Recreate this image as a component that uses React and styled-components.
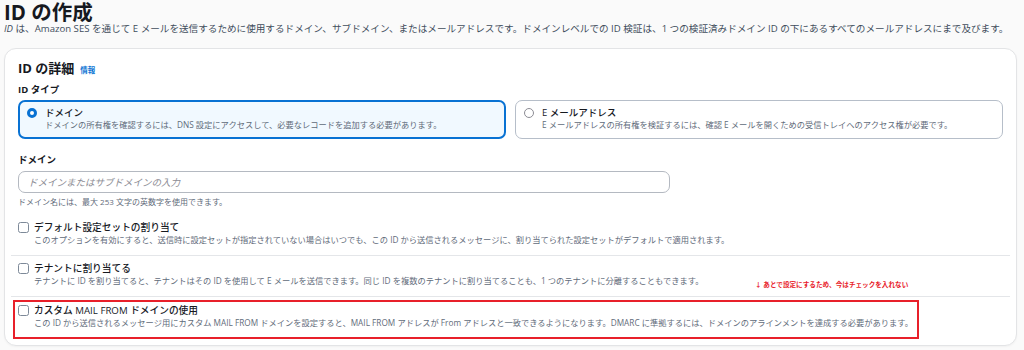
import React from "react";
import styled, { createGlobalStyle } from "styled-components";

const Global = createGlobalStyle`
  html, body { margin: 0; padding: 0; background: #fafafa; }
  body {
    font-family: "Open Sans", "Noto Sans CJK JP", sans-serif;
    color: #16191f;
  }
  * { box-sizing: border-box; }
`;

const Page = styled.div`
  width: 1024px;
  height: 350px;
  overflow: hidden;
  padding: 0 7px 0 4px;
`;

const Title = styled.h1`
  margin: 1px 0 0;
  font-size: 20.5px;
  line-height: 22px;
  font-weight: 700;
`;

const Lead = styled.p`
  margin: -1px 0 0;
  font-size: 9.6px;
  line-height: 14px;
  color: #414d5c;
  white-space: nowrap;
  em { font-style: italic; }
`;

const Card = styled.section`
  margin-top: 12px;
  height: 298px;
  background: #fff;
  border: 1px solid #e3e4e6;
  border-radius: 12px;
  box-shadow: 0 1px 2px rgba(0, 0, 0, 0.04);
  padding: 11px 13px 0 13px;
`;

const HeadingRow = styled.div`
  display: flex;
  align-items: baseline;
  gap: 6px;
`;

const Heading = styled.h2`
  margin: 0;
  font-size: 13px;
  line-height: 16px;
  font-weight: 700;
`;

const InfoLink = styled.a`
  font-size: 7.5px;
  font-weight: 700;
  color: #0972d3;
  text-decoration: none;
`;

const FieldLabel = styled.div`
  margin-top: ${(p) => p.$mt}px;
  font-size: 9.5px;
  line-height: 14px;
  font-weight: 700;
`;

const Tiles = styled.div`
  margin-top: 3px;
  display: grid;
  grid-template-columns: 1fr 1fr;
  gap: 9px;
`;

const Tile = styled.label`
  height: 39px;
  display: flex;
  align-items: flex-start;
  gap: 8px;
  border-radius: 7px;
  padding: ${(p) => (p.$selected ? "5px 11px 0 7px" : "6px 12px 0 8px")};
  border: ${(p) => (p.$selected ? "2px solid #0972d3" : "1px solid #b6bec9")};
  background: ${(p) => (p.$selected ? "#f1f9ff" : "#fff")};
`;

const Radio = styled.span`
  flex: none;
  width: 10px;
  height: 10px;
  margin-top: 1px;
  border-radius: 50%;
  background: #fff;
  border: ${(p) => (p.$checked ? "3px solid #0972d3" : "1px solid #8c8c94")};
`;

const TileText = styled.div`
  display: flex;
  flex-direction: column;
`;

const TileTitle = styled.span`
  font-size: 9.5px;
  line-height: 12px;
  font-weight: 500;
  color: #16191f;
`;

const Desc = styled.span`
  font-size: 8.25px;
  line-height: 11px;
  color: #5f6b7a;
  white-space: nowrap;
`;

const Input = styled.input`
  display: block;
  margin-top: 4px;
  width: 652px;
  height: 22px;
  border: 1px solid #b4b9c1;
  border-radius: 7px;
  padding: 0 9px;
  font-family: inherit;
  font-size: 9.5px;
  background: #fff;
  outline: none;
  &::placeholder {
    color: #8c8c94;
    font-style: italic;
  }
`;

const Help = styled.div`
  margin-top: 3px;
  font-size: 8px;
  line-height: 11px;
  color: #5f6b7a;
`;

const Options = styled.div`
  margin-top: 8px;
`;

const Divider = styled.hr`
  margin: 0 -7px;
  border: none;
  border-top: 1px solid #e4e6e9;
`;

const Row = styled.div`
  position: relative;
  display: flex;
  align-items: flex-start;
  gap: 5px;
  padding: ${(p) => (p.$last ? "7px 0 10px 0" : "6px 0 10px 0")};
`;

const Checkbox = styled.span`
  flex: none;
  width: 11px;
  height: 11px;
  margin-top: 1px;
  border: 1px solid #7d8998;
  border-radius: 2.5px;
  background: #fff;
`;

const RowText = styled.div`
  display: flex;
  flex-direction: column;
`;

const RowTitle = styled.span`
  font-size: 9.7px;
  line-height: 13px;
  font-weight: 500;
`;

const Highlight = styled.div`
  position: absolute;
  left: -5px;
  top: 3px;
  width: 906px;
  height: 39px;
  border: 2px solid #e8202a;
  pointer-events: none;
`;

const Note = styled.div`
  position: absolute;
  left: 737px;
  top: -17px;
  font-size: 6.6px;
  line-height: 10px;
  font-weight: 700;
  color: #e8202a;
  white-space: nowrap;
`;

const options = [
  {
    title: "デフォルト設定セットの割り当て",
    desc: "このオプションを有効にすると、送信時に設定セットが指定されていない場合はいつでも、この ID から送信されるメッセージに、割り当てられた設定セットがデフォルトで適用されます。",
  },
  {
    title: "テナントに割り当てる",
    desc: "テナントに ID を割り当てると、テナントはその ID を使用して E メールを送信できます。同じ ID を複数のテナントに割り当てることも、1 つのテナントに分離することもできます。",
  },
  {
    title: "カスタム MAIL FROM ドメインの使用",
    desc: "この ID から送信されるメッセージ用にカスタム MAIL FROM ドメインを設定すると、MAIL FROM アドレスが From アドレスと一致できるようになります。DMARC に準拠するには、ドメインのアラインメントを達成する必要があります。",
    highlight: true,
  },
];

export default function App() {
  return (
    <>
      <Global />
      <Page>
        <Title>ID の作成</Title>
        <Lead>
          <em>ID</em> は、Amazon SES を通じて E メールを送信するために使用するドメイン、サブドメイン、またはメールアドレスです。ドメインレベルでの ID 検証は、1 つの検証済みドメイン ID の下にあるすべてのメールアドレスにまで及びます。
        </Lead>
        <Card>
          <HeadingRow>
            <Heading>ID の詳細</Heading>
            <InfoLink href="#">情報</InfoLink>
          </HeadingRow>
          <FieldLabel $mt={7}>ID タイプ</FieldLabel>
          <Tiles>
            <Tile $selected>
              <Radio $checked />
              <TileText>
                <TileTitle>ドメイン</TileTitle>
                <Desc>ドメインの所有権を確認するには、DNS 設定にアクセスして、必要なレコードを追加する必要があります。</Desc>
              </TileText>
            </Tile>
            <Tile>
              <Radio />
              <TileText>
                <TileTitle>E メールアドレス</TileTitle>
                <Desc>E メールアドレスの所有権を検証するには、確認 E メールを開くための受信トレイへのアクセス権が必要です。</Desc>
              </TileText>
            </Tile>
          </Tiles>
          <FieldLabel $mt={14}>ドメイン</FieldLabel>
          <Input placeholder="ドメインまたはサブドメインの入力" />
          <Help>ドメイン名には、最大 253 文字の英数字を使用できます。</Help>
          <Options>
            {options.map((o, i) => (
              <React.Fragment key={o.title}>
                {i > 0 && <Divider />}
                <Row $last={i === options.length - 1}>
                  {o.highlight && (
                    <>
                      <Note>↓ あとで設定にするため、今はチェックを入れない</Note>
                      <Highlight />
                    </>
                  )}
                  <Checkbox />
                  <RowText>
                    <RowTitle>{o.title}</RowTitle>
                    <Desc>{o.desc}</Desc>
                  </RowText>
                </Row>
              </React.Fragment>
            ))}
          </Options>
        </Card>
      </Page>
    </>
  );
}
